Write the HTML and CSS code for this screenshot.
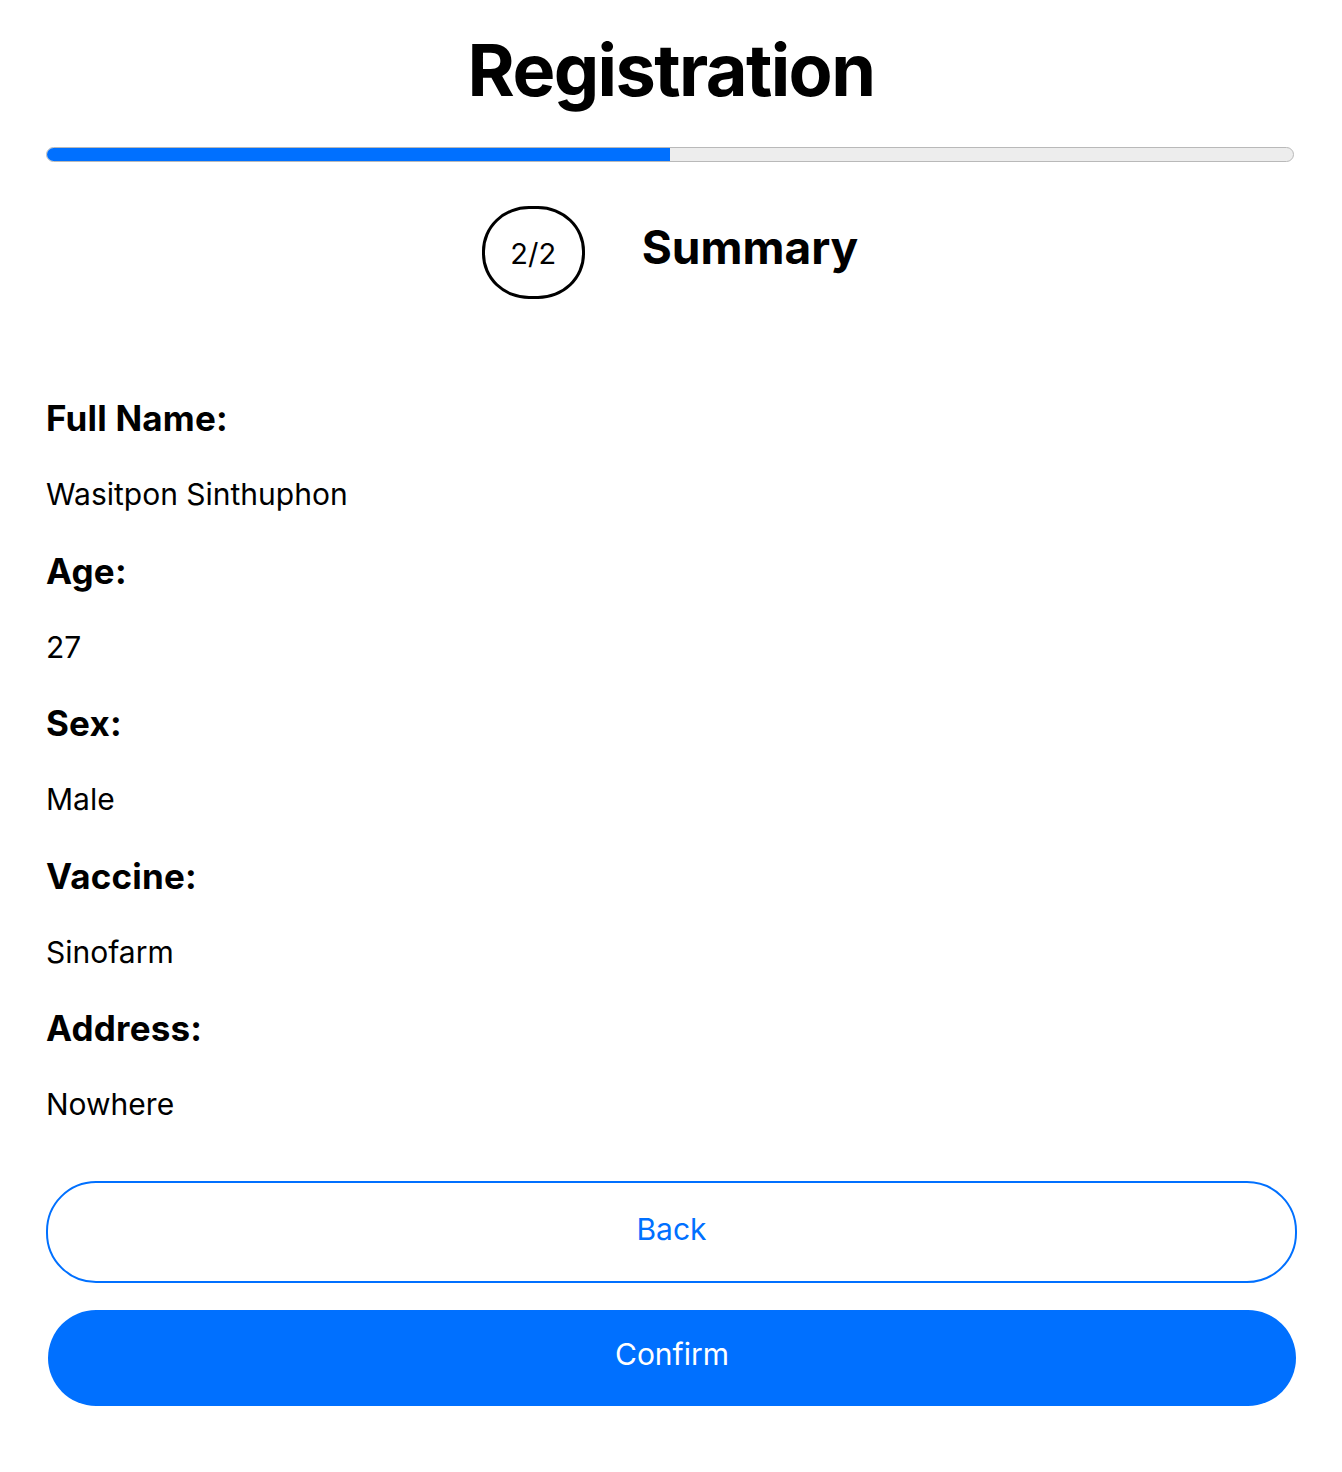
FILE: index.html
```html
<!DOCTYPE html>
<html lang="en">
<head>
<meta charset="utf-8">
<title>Registration</title>
<link rel="stylesheet" href="styles.css">
</head>
<body>
<main class="page">
  <h1 class="title">Registration</h1>
  <div class="progress"><div class="progress-fill" style="width:50%"></div></div>
  <div class="step">
    <div class="step-badge">2/2</div>
    <h2 class="step-title">Summary</h2>
  </div>
  <dl class="summary">
    <dt>Full Name:</dt>
    <dd>Wasitpon Sinthuphon</dd>
    <dt>Age:</dt>
    <dd>27</dd>
    <dt>Sex:</dt>
    <dd>Male</dd>
    <dt>Vaccine:</dt>
    <dd>Sinofarm</dd>
    <dt>Address:</dt>
    <dd>Nowhere</dd>
  </dl>
  <div class="actions">
    <button class="btn btn-outline" type="button">Back</button>
    <button class="btn btn-primary" type="button">Confirm</button>
  </div>
</main>
</body>
</html>
```

FILE: styles.css
```css
* { box-sizing: border-box; }
html, body { margin: 0; padding: 0; background: #fff; }
body {
  font-family: Inter, "Noto Sans", "Liberation Sans", sans-serif;
  color: #000;
}
.page {
  padding: 26px 46px 40px 46px;
  display: flex;
  flex-direction: column;
}
.title {
  margin: 0;
  text-align: center;
  font-size: 72px;
  font-weight: 700;
  line-height: 88px;
  letter-spacing: -1.6px;
}
.progress {
  margin-top: 33px;
  height: 15px;
  width: 1248px;
  background: #ededed;
  border: 1px solid #b9b9b9;
  border-radius: 8px;
  overflow: hidden;
}
.progress-fill {
  height: 100%;
  background: #0070ff;
}
.step {
  margin-top: 44px;
  display: flex;
  justify-content: center;
  align-items: center;
  gap: 57px;
}
.step-badge {
  width: 103px;
  height: 93px;
  border: 3.5px solid #000;
  border-radius: 47px / 45px;
  display: flex;
  align-items: center;
  justify-content: center;
  font-size: 29px;
  padding-top: 2px;
}
.step-title {
  margin: 0 0 12px 0;
  font-size: 46px;
  font-weight: 700;
  padding-right: 2px;
}
.summary {
  margin: 99px 0 0 0;
  display: flex;
  flex-direction: column;
  gap: 36.25px;
}
.summary dt {
  font-size: 35px;
  font-weight: 700;
  line-height: 40px;
  margin: 0;
  letter-spacing: 0.2px;
}
.summary dd {
  font-size: 30px;
  line-height: 40px;
  margin: 0;
}
.actions {
  margin-top: 57px;
  display: flex;
  flex-direction: column;
  gap: 27px;
}
.btn {
  font-family: inherit;
  font-size: 30px;
  border-radius: 50px;
  cursor: pointer;
}
.btn-outline {
  height: 102px;
  width: 1251px;
  background: #fff;
  border: 2px solid #0070ff;
  color: #0070ff;
  padding-bottom: 8px;
}
.btn-primary {
  height: 96px;
  width: 1248px;
  margin-left: 2px;
  background: #0070ff;
  border: none;
  color: #fff;
  padding-bottom: 10px;
}
```
